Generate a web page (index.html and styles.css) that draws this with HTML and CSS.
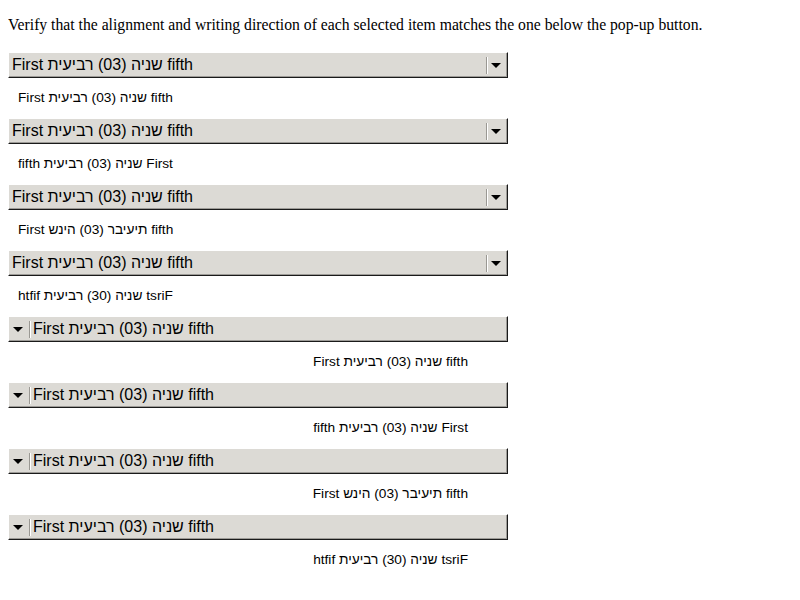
FILE: index.html
```html
<!DOCTYPE html>
<html>
<head>
<meta charset="utf-8">
<link rel="stylesheet" href="styles.css">
</head>
<body>
<p class="intro">Verify that the alignment and writing direction of each selected item matches the one below the pop-up button.</p>
<div class="tests">
  <div class="popup ltr"><span class="label" dir="ltr">First שניה (03) רביעית fifth</span><span class="sep"></span><span class="arrow"></span></div>
  <div class="item left"><span class="t-ltr">First שניה (03) רביעית fifth</span></div>

  <div class="popup ltr"><span class="label" dir="ltr">First שניה (03) רביעית fifth</span><span class="sep"></span><span class="arrow"></span></div>
  <div class="item left"><span class="t-rtl">First שניה (03) רביעית fifth</span></div>

  <div class="popup ltr"><span class="label" dir="ltr">First שניה (03) רביעית fifth</span><span class="sep"></span><span class="arrow"></span></div>
  <div class="item left"><span class="t-ltr-override">First שניה (03) רביעית fifth</span></div>

  <div class="popup ltr"><span class="label" dir="ltr">First שניה (03) רביעית fifth</span><span class="sep"></span><span class="arrow"></span></div>
  <div class="item left"><span class="t-rtl-override">First שניה (03) רביעית fifth</span></div>

  <div class="popup rtl"><span class="arrow"></span><span class="sep"></span><span class="label" dir="ltr">First שניה (03) רביעית fifth</span></div>
  <div class="item right"><span class="t-ltr">First שניה (03) רביעית fifth</span></div>

  <div class="popup rtl"><span class="arrow"></span><span class="sep"></span><span class="label" dir="ltr">First שניה (03) רביעית fifth</span></div>
  <div class="item right"><span class="t-rtl">First שניה (03) רביעית fifth</span></div>

  <div class="popup rtl"><span class="arrow"></span><span class="sep"></span><span class="label" dir="ltr">First שניה (03) רביעית fifth</span></div>
  <div class="item right"><span class="t-ltr-override">First שניה (03) רביעית fifth</span></div>

  <div class="popup rtl"><span class="arrow"></span><span class="sep"></span><span class="label" dir="ltr">First שניה (03) רביעית fifth</span></div>
  <div class="item right"><span class="t-rtl-override">First שניה (03) רביעית fifth</span></div>
</div>
</body>
</html>
```
FILE: styles.css
```css
html, body {
  background: #ffffff;
}
body {
  margin: 8px;
  font-family: "Liberation Serif", "Times New Roman", serif;
  font-size: 16px;
  color: #000;
}
.intro {
  margin: 8px 0 16px;
  font-size: 15.7px;
  line-height: 18px;
}
.tests {
  width: 500px;
  display: flex;
  flex-direction: column;
}
.popup {
  box-sizing: border-box;
  height: 26px;
  margin: 2px 0;
  display: flex;
  align-items: center;
  background: #dcdad5;
  border-top: 1px solid #ffffff;
  border-left: 1px solid #ffffff;
  border-right: 1px solid #1a1a1a;
  border-bottom: 1px solid #1a1a1a;
  box-shadow: inset -1px -1px 0 #9d9b97;
  font-family: "Liberation Sans", Arial, sans-serif;
  font-size: 16px;
  white-space: nowrap;
  overflow: hidden;
}
.popup .label {
  line-height: 18px;
}
.popup.ltr .label {
  flex: 1;
  padding-left: 3px;
}
.popup.rtl .label {
  flex: 1;
  padding-left: 2px;
}
.sep {
  width: 1px;
  height: 17px;
  background: #9a9893;
  border-right: 1px solid #ffffff;
}
.arrow {
  width: 0;
  height: 0;
  border-left: 5px solid transparent;
  border-right: 5px solid transparent;
  border-top: 5px solid #000;
}
.popup.ltr .arrow {
  margin: 1px 6px 0 3px;
}
.popup.rtl .arrow {
  margin: 1px 6px 0 4px;
}
.item {
  box-sizing: border-box;
  height: 36px;
  padding-top: 10px;
  font-family: "Liberation Sans", Arial, sans-serif;
  font-size: 13.7px;
  line-height: 15px;
  white-space: nowrap;
}
.item.left {
  padding-left: 10px;
  text-align: left;
}
.item.right {
  padding-right: 40px;
  text-align: right;
}
.item span {
  display: inline-block;
}
.t-ltr {
  direction: ltr;
  unicode-bidi: embed;
}
.t-rtl {
  direction: rtl;
  unicode-bidi: embed;
}
.t-ltr-override {
  direction: ltr;
  unicode-bidi: bidi-override;
}
.t-rtl-override {
  direction: rtl;
  unicode-bidi: bidi-override;
}
```
